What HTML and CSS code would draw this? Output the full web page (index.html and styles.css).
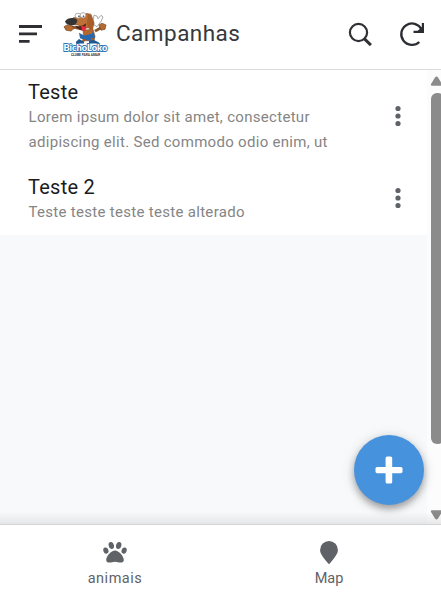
FILE: index.html
```html
<!DOCTYPE html>
<html lang="pt-BR">
<head>
<meta charset="utf-8">
<title>Campanhas</title>
<link rel="stylesheet" href="styles.css">
</head>
<body>
<div class="app">
  <header class="topbar">
    <svg class="menu" width="24" height="18" viewBox="0 0 24 18"><path d="M0 1.5h23M0 8.9h18M0 16.3h10.6" stroke="#2e2f33" stroke-width="2.8"/></svg>
    <svg class="logo" width="48" height="48" viewBox="0 0 48 48">
      <g transform="translate(0 .5) scale(1 .88)">
      <path d="M30 8l1-6 3 1 1 3 3-4 2 2-2 5-4 6-3-2z" fill="#fff" stroke="#888" stroke-width=".8"/>
      <path d="M21 18L8 15M32 20l8-5" stroke="#8a5426" stroke-width="3"/>
      <path d="M1 15l3-2 5 1 2 3-3 3-5-1zM36 13l3-2 4 2-1 5-4 1z" fill="#b66a30" stroke="#70431f" stroke-width=".7"/>
      <path d="M20 19l10-1 2 8-1 5H21z" fill="#b5672c" stroke="#70431f" stroke-width=".6"/>
      <path d="M16 22l5 3 8-2 1-3 2 7-3 4-7-1-5-2z" fill="#2768b0"/>
      <path d="M21 29l-1 3M29 28l1 4" stroke="#a75c28" stroke-width="2.500"/>
      <path d="M13 32l3-3 5 3v2h-8zM26 31l5-1 5 3v1H26z" fill="#1f5791"/>
      <path d="M10 5l8-2 6-3 4 1 3 10-2 7-3-2-5 1-6-4-6-1z" fill="#bd7136" stroke="#72431e" stroke-width=".7"/>
      <path d="M25 1c5 0 6 10 5 18-4 1-6-4-6-9z" fill="#a95e27"/>
      <ellipse cx="15" cy="2.500" rx="2.900" ry="2.800" fill="#fff" stroke="#888" stroke-width=".7"/>
      <ellipse cx="20" cy="2" rx="2.800" ry="3" fill="#fff" stroke="#888" stroke-width=".7"/>
      <circle cx="16" cy="3.200" r=".8" fill="#222"/><circle cx="20.500" cy="3" r=".8" fill="#222"/>
      <path d="M2 9c2-4 9-5 12-2 1 2-1 5-3 6-3 1-8 0-9-4z" fill="#343434"/>
      <path d="M12 14c5 1 8 0 11-3 0 5-2 8-5 8-3-1-5-3-6-5z" fill="#4b2620"/>
      <path d="M18 14l5 1c1 3-1 5-4 4z" fill="#ee293f"/>
      </g>
      <text class="logo-name" x=".5" y="38.300" textLength="43.800" lengthAdjust="spacingAndGlyphs">BichoLoko</text>
      <text class="logo-sub" x="8" y="43" textLength="29" lengthAdjust="spacingAndGlyphs">CLUBE PARA AMAR</text>
    </svg>
    <h1 class="title">Campanhas</h1>
    <svg class="search" width="26" height="26" viewBox="0 0 26 26"><circle cx="10.500" cy="10.500" r="8.600" fill="none" stroke="#303135" stroke-width="2.200"/><path d="M16.200 16.700l6.700 6.500" stroke="#303135" stroke-width="3"/></svg>
    <svg class="reload" width="27" height="26" viewBox="0 0 27 26"><path d="M22.500 8.300A10.700 10.700 0 1 0 20.300 21" fill="none" stroke="#2b2d33" stroke-width="2.300"/><path d="M23.900 2v8.800H14.500" fill="none" stroke="#2b2d33" stroke-width="2.200"/><path d="M18.500 10l5.500-5v5z" fill="#2b2d33"/></svg>
  </header>
  <main class="content">
    <section class="list">
      <article class="item">
        <div class="text">
          <h2 class="name">Teste</h2>
          <p class="desc">Lorem ipsum dolor sit amet, consectetur<br>adipiscing elit. Sed commodo odio enim, ut</p>
        </div>
        <svg class="dots" width="6" height="20" viewBox="0 0 6 20" fill="#5f6368"><circle cx="3" cy="2.500" r="2.600"/><circle cx="3" cy="10" r="2.600"/><circle cx="3" cy="17.500" r="2.600"/></svg>
      </article>
      <article class="item">
        <div class="text">
          <h2 class="name">Teste 2</h2>
          <p class="desc">Teste teste teste teste alterado</p>
        </div>
        <svg class="dots" width="6" height="20" viewBox="0 0 6 20" fill="#5f6368"><circle cx="3" cy="2.500" r="2.600"/><circle cx="3" cy="10" r="2.600"/><circle cx="3" cy="17.500" r="2.600"/></svg>
      </article>
    </section>
    <div class="scrollbar">
      <svg class="arrow" width="13" height="10" viewBox="0 0 13 10"><path d="M1 8L5 1.400q1.500-2 3 0L12 8q.6 1.700-1 1.700H2Q.4 9.700 1 8z" fill="#8b8b8b"/></svg>
      <div class="thumb"></div>
      <svg class="arrow down" width="13" height="10" viewBox="0 0 13 10"><path d="M1 8L5 1.400q1.500-2 3 0L12 8q.6 1.700-1 1.700H2Q.4 9.700 1 8z" fill="#8b8b8b"/></svg>
    </div>
    <button class="fab" aria-label="Adicionar"><svg width="28" height="28" viewBox="0 0 28 28" fill="#fff"><rect x="10.600" y=".5" width="6.600" height="27" rx="1.600"/><rect x=".5" y="10.900" width="27" height="6.300" rx="1.600"/></svg></button>
  </main>
  <nav class="tabs">
    <a class="tab">
      <svg width="24" height="24" viewBox="0 0 24 24" fill="#5f6368"><path d="M12 10.400c3.700 0 8.800 5.800 8.800 9.500 0 2-1.400 2.700-3.100 2.700-2 0-3.600-.9-5.700-.9s-3.700.9-5.700.9c-1.700 0-3.100-.7-3.100-2.700 0-3.700 5.100-9.500 8.800-9.500z"/><ellipse cx="8.300" cy="5.500" rx="2.600" ry="3.600" transform="rotate(-14 8.300 5.500)"/><ellipse cx="15.700" cy="5.500" rx="2.600" ry="3.600" transform="rotate(14 15.700 5.500)"/><ellipse cx="2.900" cy="10.600" rx="2.500" ry="3.200" transform="rotate(-20 2.900 10.600)"/><ellipse cx="21.100" cy="10.600" rx="2.500" ry="3.200" transform="rotate(20 21.100 10.600)"/></svg>
      <span class="wide">animais</span>
    </a>
    <a class="tab">
      <svg width="24" height="24" viewBox="0 0 24 24" fill="#5f6368"><path d="M12 1a8.900 8.900 0 0 1 8.900 8.900c0 3.800-2.600 6.600-7.900 13.400q-1 1.200-2 0C5.700 16.500 3.100 13.700 3.100 9.900A8.900 8.900 0 0 1 12 1z"/></svg>
      <span>Map</span>
    </a>
  </nav>
</div>
</body>
</html>
```
FILE: styles.css
```css
* { box-sizing: border-box; margin: 0; padding: 0; }
body { font-family: Roboto, "Liberation Sans", sans-serif; overflow: hidden; background: #fff; }
.app { display: flex; flex-direction: column; width: 441px; height: 600px; }
.topbar { display: flex; align-items: flex-start; height: 70px; border-bottom: 1px solid #dadada; flex: none; }
.menu { margin: 25px 0 0 19px; }
.logo { margin: 13px 0 0 20px; overflow: visible; }
.logo-name { font: 900 9.500px Lato, sans-serif; fill: #fff; stroke: #3374b5; stroke-width: 1.800px; paint-order: stroke; }
.logo-sub { font: 700 2.800px Roboto, sans-serif; fill: #333; }
.title { margin: 17px 0 0 5px; width: 219px; font-size: 22.500px; line-height: 32px; font-weight: 400; color: #36383c; letter-spacing: .47px; }
.search { margin: 22px 0 0 13px; }
.reload { margin: 21px 0 0 25px; }
.topbar svg { flex: none; }
.content { position: relative; display: flex; flex: none; height: 454px; background: #f8f9fb; }
.content::after { content: ""; position: absolute; left: 0; right: 0; bottom: 0; height: 12px; background: linear-gradient(transparent, rgba(0,0,0,.08)); }
.list { width: 427px; flex: none; }
.item { display: flex; height: 70px; background: #fff; padding: 9px 26px 0 28px; }
.item:first-child { height: 95px; }
.text { flex: 1; }
.name { font-size: 20px; line-height: 27px; font-weight: 400; color: #1b1c1e; letter-spacing: .25px; }
.desc { margin-top: -1px; padding-left: .5px; font-size: 15px; line-height: 25px; color: #858585; white-space: nowrap; letter-spacing: .3px; }
.dots { margin-top: 27px; overflow: visible; }
.item:last-child .dots { margin-top: 14px; }
.scrollbar { display: flex; flex-direction: column; align-items: flex-end; width: 14px; overflow: hidden; background: #fcfcfc; }
.arrow { flex: none; margin: 6px -2px 0 0; }
.thumb { flex: none; width: 13px; height: 351px; margin: 7px -3px 0 0; border-radius: 6px; background: #8b8b8b; }
.arrow.down { margin-top: 66px; transform: rotate(180deg); }
.fab { position: absolute; left: 354px; top: 365px; width: 70px; height: 70px; border: 0; border-radius: 50%; background: #4792dd; display: flex; align-items: center; justify-content: center; box-shadow: 0 4px 7px rgba(0,0,0,.3), 0 2px 14px rgba(0,0,0,.14); }
.tabs { display: flex; flex: 1; padding: 0 5px 0 8px; border-top: 1px solid #d4d5d7; background: #fff; }
.tab { display: flex; flex: 1; flex-direction: column; align-items: center; padding-top: 15px; color: #5f6368; font-size: 14.500px; line-height: 18px; }
.tab span { margin-top: 6px; }
.wide { letter-spacing: .5px; }
```
